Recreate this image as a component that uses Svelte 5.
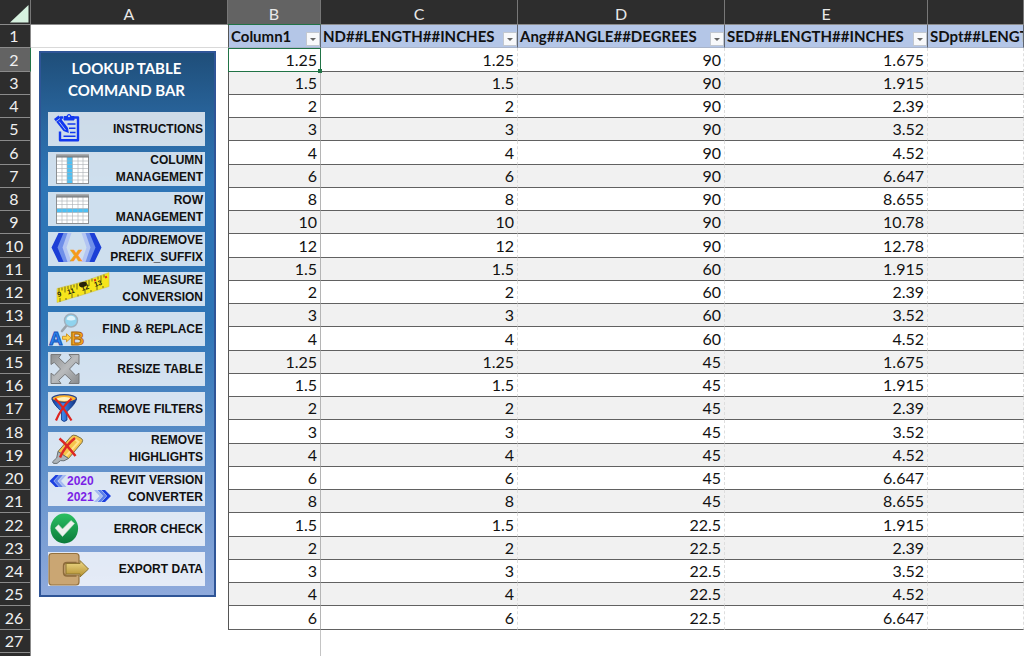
<script>
  const diameters = ['1.25', '1.5', '2', '3', '4', '6', '8', '10', '12', '1.5', '2', '3', '4', '1.25', '1.5', '2', '3', '4', '6', '8', '1.5', '2', '3', '4', '6'];
  const lengths = {
    '1.25': '1.675', '1.5': '1.915', '2': '2.39', '3': '3.52', '4': '4.52',
    '6': '6.647', '8': '8.655', '10': '10.78', '12': '12.78'
  };
  const angleAt = (i) => (i < 9 ? '90' : i < 13 ? '60' : i < 20 ? '45' : '22.5');
  const rows = diameters.map((d, i) => ({ n: i + 2, cells: [d, d, angleAt(i), lengths[d]] }));

  const letters = ['A', 'B', 'C', 'D', 'E', ''];
  const fields = ['Column1', 'ND##LENGTH##INCHES', 'Ang##ANGLE##DEGREES', 'SED##LENGTH##INCHES', 'SDpt##LENGTH##INCHES'];

  const commands = [
    { icon: 'clipboard', lines: ['INSTRUCTIONS'] },
    { icon: 'column', lines: ['COLUMN', 'MANAGEMENT'] },
    { icon: 'row', lines: ['ROW', 'MANAGEMENT'] },
    { icon: 'affix', lines: ['ADD/REMOVE', 'PREFIX_SUFFIX'] },
    { icon: 'tape', lines: ['MEASURE', 'CONVERSION'] },
    { icon: 'find', lines: ['FIND & REPLACE'] },
    { icon: 'resize', lines: ['RESIZE TABLE'] },
    { icon: 'filter', lines: ['REMOVE FILTERS'] },
    { icon: 'marker', lines: ['REMOVE', 'HIGHLIGHTS'] },
    { icon: 'revit', lines: ['REVIT VERSION', 'CONVERTER'] },
    { icon: 'check', lines: ['ERROR CHECK'] },
    { icon: 'export', lines: ['EXPORT DATA'] }
  ];
</script>

{#snippet art(name)}
  <svg class="art" viewBox="0 0 42 34" aria-hidden="true">
    {#if name === 'clipboard'}
      <g fill="none" stroke="#1238f0" stroke-width="2.400" stroke-linejoin="round">
        <path d="M15 5.500h-2.500v3M12 19.500v8.800h18V5.500h-4" />
        <path d="M16 8V4.500h3a2 2 0 0 1 4 0h3V8z" fill="#1238f0" stroke-width="1" />
        <path d="M19.500 12h8M21 16.300h6.500M22 20.500h5.500M15.500 24.300h12" stroke-width="1.600" />
      </g>
      <path d="M6 7l4.500-3.500 9.500 12.500.8 5-5.300-2z" fill="#1238f0" />
      <path d="M11 9.500l6.500 8.500M8 9.500l4-3" stroke="#cfdff0" stroke-width=".8" />
      <circle cx="21" cy="4.300" r="1" fill="#cfdff0" />
    {:else if name === 'column' || name === 'row'}
      <rect x="8.500" y="2.500" width="32" height="29" fill="#fff" stroke="#8c8f92" />
      {#if name === 'column'}
        <rect x="19" y="5" width="5.500" height="26" fill="#4cc0f5" />
      {:else}
        <rect x="9" y="16.500" width="31" height="4" fill="#4cc0f5" />
      {/if}
      <path d="M14 5v26M19 5v26M24.500 5v26M30 5v26M35 5v26M9 9h31M9 12.500h31M9 16.500h31M9 20.500h31M9 24h31M9 28h31" stroke="#a9afb4" stroke-width=".6" />
      <rect x="8" y="2" width="33" height="3.500" fill="url(#steel)" />
    {:else if name === 'affix'}
      <path d="M17.500 1h6L18.500 15.500l5 14.500h-6L12 15.500z" fill="#b3c5f3" />
      <path d="M14 1h5.500L14.500 15.500l5 14.500H14L7.500 15.500z" fill="#6f8fe9" />
      <path d="M10.500 1h5L9.500 15.500l6 14.500h-5L3.500 15.500z" fill="#1c3fd6" />
      <path d="M39.500 1h-6L38.500 15.500l-5 14.500h6L45 15.500z" fill="#b3c5f3" />
      <path d="M43 1h-5.500L42.500 15.500l-5 14.500H43L49.500 15.500z" fill="#6f8fe9" />
      <path d="M46.500 1h-5L47.500 15.500l-6 14.500h5L53.500 15.500z" fill="#1c3fd6" />
      <text x="22.500" y="29" class="glyph" font-size="21" fill="#f59a1c" stroke="#f59a1c" stroke-width=".6">x</text>
    {:else if name === 'tape'}
      <path d="M9 16.500Q35 11 61 .5v14Q35 23 9 30.500z" fill="#f6e51c" stroke="#d2c24e" stroke-width=".6" />
      <path d="M11 16v4M14 15.500v3M17 14.500v6M20 14v3M23 13v4M26 12.500v3M29 11.500v6M32 10.500v3M38 8.500v3M41 8v6M44 6.500v3M50 4.500v3M53 3.500v6M56 2.500v3" stroke="#55501a" stroke-width=".8" />
      <path d="M12 30v-4M18 28v-2M24 26v-4M30 24.500v-2M37 22v-4M43 20v-2M49 18v-4M55 16v-2" stroke="#55501a" stroke-width=".8" />
      <g fill="#26220a" class="glyph" font-size="7">
        <text x="10" y="25" transform="rotate(-14 10 25)">9</text>
        <text x="20" y="22.500" transform="rotate(-16 20 22.500)">11</text>
        <text x="34" y="19" transform="rotate(-17 34 19)">12</text>
        <text x="47" y="15" transform="rotate(-18 47 15)">13</text>
      </g>
      <ellipse cx="35" cy="12.500" rx="4" ry="2.500" fill="#26220a" transform="rotate(-14 35 12.500)" />
      <path d="M46 8.500l2-.7M57 5.500l2-.7" stroke="#e0301e" stroke-width="2" />
    {:else if name === 'find'}
      <path d="M19 13l-5 6" stroke="#9aa3ab" stroke-width="2.600" stroke-linecap="round" />
      <circle cx="23" cy="8.500" r="6.500" fill="#8fd3ee" stroke="#a0b0bd" stroke-width="1.500" />
      <path d="M18.500 7.500a4.600 4.600 0 0 1 9 0q-4.500 2-9 0z" fill="#dff4fc" />
      <text x="1" y="33" class="glyph" font-size="19" fill="#2b86f0" stroke="#1551b8" stroke-width=".9">A</text>
      <text x="22.500" y="33" class="glyph" font-size="19" fill="#f5a623" stroke="#a86406" stroke-width=".9">B</text>
      <path d="M14.500 24.300h4v-2.500l4.500 4-4.500 4v-2.500h-4z" fill="#ffd34d" stroke="#c98a12" stroke-width=".8" />
    {:else if name === 'resize'}
      <path d="M3 2.500h10l-2.300 3.200 6.300 6 6.300-6L21 2.500h10v10l-3.200-2.200-6.300 6.700 6.300 6.500 3.200-2.300v10.300H21l2.300-3.200-6.300-6-6.300 6 2.300 3.200H3V21.200l3.200 2.300 6.300-6.500-6.300-6.700L3 12.500z" fill="url(#metal)" stroke="#77797b" stroke-linejoin="round" />
    {:else if name === 'filter'}
      <path d="M4 7q1 5 9.500 12.500V28q2.500 3 5.500 0v-8.500Q27.500 12 28.500 7z" fill="url(#funnel)" stroke="#12337e" stroke-width=".8" />
      <ellipse cx="16.200" cy="6.500" rx="12.200" ry="3.800" fill="#ffb52e" stroke="#27458e" stroke-width="1.200" />
      <ellipse cx="16.200" cy="7" rx="7.500" ry="1.900" fill="#fff1bd" />
      <path d="M7 6.500q8 8 16.500 22M23.500 6.500Q13 16 8 28.500" stroke="#dd2420" stroke-width="2.200" fill="none" />
    {:else if name === 'marker'}
      <path d="M23 4.500q2-2.200 5-1l5.500 3q2 1.500.5 4L20.500 26.500l-10.500-7z" fill="#f5c54b" stroke="#7c7048" />
      <path d="M25 6l5.500 4L18 24" stroke="#ffe28a" stroke-width="2" fill="none" />
      <path d="M10 19.500l10.500 7-4.500 2.300-3.500-.2-3.500 2.800H5.500l-1-1.500 4.200-4z" fill="#aeb5ba" stroke="#6a7074" />
      <path d="M11.500 6.500q7 6 16 17.500M27 6Q17 14 12 25.500" stroke="#dc2824" stroke-width="2.500" fill="none" />
    {:else if name === 'revit'}
      <path d="M15.500 3h3L13 9l5.500 6h-3L10 9z" fill="#a5b9f1" />
      <path d="M11.500 3H15L9.500 9l5.500 6h-3.500L6 9z" fill="#5d80ea" />
      <path d="M7.500 3H11L5.500 9l5.500 6H7.500L1.500 9z" fill="#1c3fe0" />
      <path d="M49 18h-3l5.500 6-5.500 6h3l5.500-6z" fill="#a5b9f1" />
      <path d="M53 18h-3.500l5.500 6-5.500 6H53l5.500-6z" fill="#5d80ea" />
      <path d="M57 18h-3.500l5.500 6-5.500 6H57l6-6z" fill="#1c3fe0" />
      <text x="19" y="13" class="glyph" font-size="12" fill="#7a1fe6">2020</text>
      <text x="19" y="29" class="glyph" font-size="12" fill="#7a1fe6">2021</text>
    {:else if name === 'check'}
      <ellipse cx="16.300" cy="16.500" rx="13.800" ry="15" fill="url(#leaf)" />
      <path d="M7 16l3.500-3.300 4 4.300 8.500-8.500 3.500 3L14.500 24.500z" fill="#eef1ee" stroke="#b9d8c2" stroke-width=".6" />
    {:else}
      <path d="M4 1.500h24q3 0 3 3V11H19q-3 0-3 3v6q0 3 3 3h12v7q0 3-3 3H4q-3 0-3-3v-25.500q0-3 3-3z" fill="#caa673" stroke="#94713d" stroke-width="1.200" />
      <path d="M31 11.500H18.500q-2.500 0-2.500 3v5q0 3 2.500 3H31V11.500z" fill="#caa673" />
      <path d="M28.500 10.500h-9.500q-3.500 0-3.500 3.500v6.500q0 3.500 3.500 3.500h9.500" fill="none" stroke="#8d6b3c" stroke-width="1.400" />
      <path d="M18 11.500h14V8.500l8.500 8.500-8.500 8v-3H18z" fill="url(#gold)" stroke="#8c7430" />
    {/if}
  </svg>
{/snippet}

<svg class="defs" aria-hidden="true">
  <defs>
    <linearGradient id="steel" x2="0" y2="1"><stop stop-color="#b4b7ba" /><stop offset="1" stop-color="#6f7376" /></linearGradient>
    <linearGradient id="metal" x2="1" y2="1"><stop stop-color="#8d9092" /><stop offset=".5" stop-color="#b9bbbd" /><stop offset="1" stop-color="#898b8d" /></linearGradient>
    <linearGradient id="funnel"><stop stop-color="#123a9e" /><stop offset=".45" stop-color="#3c86e8" /><stop offset="1" stop-color="#0d2c7c" /></linearGradient>
    <linearGradient id="leaf" x2="0" y2="1"><stop stop-color="#2bbf62" /><stop offset="1" stop-color="#0b7a3a" /></linearGradient>
    <linearGradient id="gold" x2="0" y2="1"><stop stop-color="#f1dc8b" /><stop offset="1" stop-color="#b08d2c" /></linearGradient>
  </defs>
</svg>

<main class="sheet">
  <table>
    <colgroup>
      <col class="num" /><col class="a" /><col class="b" /><col class="c" /><col class="d" /><col class="e" /><col />
    </colgroup>
    <thead>
      <tr>
        <th class="corner"><svg viewBox="0 0 30 24" aria-hidden="true"><path d="M10 22.500h18.500V5z" fill="#d6f1df" /></svg></th>
        {#each letters as l}
          <th class="letter" class:active={l === 'B'} scope="col">{l}</th>
        {/each}
      </tr>
    </thead>
    <tbody>
      <tr>
        <th class="rownum" scope="row">1</th>
        <td class="blank"></td>
        {#each fields as f, i}
          <th class="field" class:first={i === 0} scope="col">
            <div class="fieldbox">
              <span>{f}</span>
              <button class="drop" aria-label={'Filter ' + f}>
                <svg viewBox="0 0 12 12" aria-hidden="true"><path d="M3 5h6L6 8z" fill="#666" /></svg>
              </button>
            </div>
          </th>
        {/each}
      </tr>
      {#each rows as r, i}
        <tr class:band={i % 2 === 1}>
          <th class="rownum" class:active={i === 0} scope="row">{r.n}</th>
          {#if i === 0}
            <td class="side" rowspan="27">
              <nav class="panel" aria-label="Lookup table command bar">
                <h1>LOOKUP TABLE<br />COMMAND BAR</h1>
                <div class="commands">
                  {#each commands as c}
                    <button class="command">
                      {@render art(c.icon)}
                      <span class="label">{#each c.lines as line}<span>{line}</span>{/each}</span>
                    </button>
                  {/each}
                </div>
              </nav>
            </td>
          {/if}
          {#each r.cells as v, j}
            <td class="cell" class:first={j === 0} class:picked={i === 0 && j === 0}>{v}</td>
          {/each}
          <td class="cell"></td>
        </tr>
      {/each}
      {#each ['27', ''] as n}
        <tr>
          <th class="rownum" scope="row">{n}</th>
          <td class="edge"></td>
          <td colspan="4"></td>
        </tr>
      {/each}
    </tbody>
  </table>
</main>

<style>
  :global(body) { margin: 0; background: #fff; }
  .defs { position: absolute; width: 0; height: 0; }
  .sheet {
    height: 100vh;
    overflow: hidden;
    font-family: Lato, "Open Sans", sans-serif;
    font-size: 16px;
    line-height: 20px;
    color: #111;
  }
  table { width: 100%; table-layout: fixed; border-collapse: separate; border-spacing: 0; }
  .num { width: 31px; }
  .a { width: 197px; }
  .b { width: 93px; }
  .c { width: 197px; }
  .d { width: 207px; }
  .e { width: 203px; }
  th, td { box-sizing: border-box; padding: 0; height: 23px; white-space: nowrap; overflow: hidden; }
  tbody tr:nth-child(4n + 2) > :not(.side) { height: 24px; }

  thead th {
    height: 25px;
    padding-top: 4px;
    background: #2d2d2d;
    border-bottom: 1px solid #8b8b8b;
    border-right: 1px solid #777;
    color: #e8e8e8;
    font-weight: 400;
  }
  thead .corner { padding: 0; }
  .corner svg { display: block; width: 30px; height: 24px; }
  thead .active { background: #636363; border-bottom-color: #217346; }
  .rownum {
    background: #2d2d2d;
    border-right: 1px solid #8b8b8b;
    border-bottom: 1px solid #8b8b8b;
    color: #f0f0f0;
    font-weight: 400;
    padding-right: 2px;
  }
  .rownum.active { background: #636363; border-right-color: #217346; }

  .blank { border-bottom: 1px solid #d9d9d9; }
  .field {
    background: #b4c6e7;
    border-right: 1px solid #5f6672;
    border-bottom: 1px solid #a9b4c9;
    font-size: 15px;
    font-weight: 700;
    text-align: left;
  }
  .fieldbox { display: flex; align-items: flex-end; justify-content: space-between; padding-left: 2px; }
  .field.first { border-left: 1px solid #555; }
  .drop {
    flex: none;
    width: 14px;
    height: 14px;
    padding: 0;
    border: 1px solid #c3c8d0;
    background: #f8f9fb;
  }
  .drop svg { display: block; width: 12px; height: 12px; }

  .cell {
    padding-right: 3px;
    text-align: right;
    border-right: 1px dashed #dedede;
    border-bottom: 1px solid #616161;
  }
  .band .cell { background: #f1f1f1; }
  .cell.first { border-left: 1px solid #555; border-right: 1px solid #b5b5b5; }
  .cell.picked {
    position: relative;
    overflow: visible;
    border-color: #217346;
    box-shadow: inset 0 1px #217346;
  }
  .picked::after {
    content: "";
    position: absolute;
    right: -2px;
    bottom: -2px;
    width: 4px;
    height: 4px;
    background: #217346;
  }
  .edge { border-right: 1px solid #c4c4c4; }

  .side { vertical-align: top; padding: 3px 12px 0 8px; }
  .panel {
    box-sizing: border-box;
    padding: 4px 9px 9px 7px;
    border: 2px solid #2f5597;
    background: linear-gradient(#1f4e79, #2a68a2 14%, #2e75b6 24%, #2e75b6 50%, #8faadc);
  }
  h1 { margin: 0 0 11px; color: #fff; font-size: 15px; line-height: 22px; font-weight: 700; text-align: center; }
  .commands { display: grid; gap: 6px; }
  .command {
    display: flex;
    align-items: center;
    height: 34px;
    padding: 0 2px 0 0;
    border: 0;
    background: rgb(255 255 255 / .77);
    font: 700 12px/17px "Liberation Sans", Arial, sans-serif;
    color: #111;
    white-space: nowrap;
  }
  .art { flex: none; width: 42px; height: 34px; overflow: visible; }
  .glyph { font-family: "Liberation Sans", Arial, sans-serif; font-weight: 700; }
  .label { flex: 1; display: grid; justify-items: end; }
</style>
